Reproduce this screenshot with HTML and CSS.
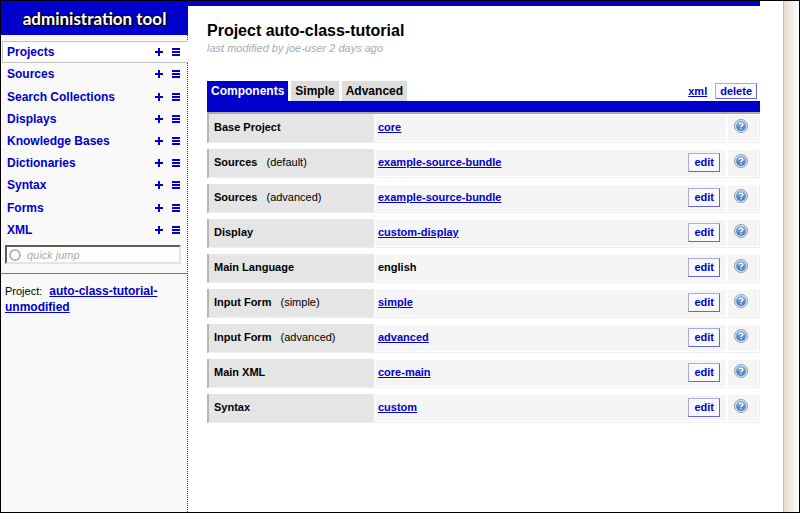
FILE: index.html
```html
<!DOCTYPE html>
<html lang="en">
<head>
<meta charset="utf-8">
<title>administration tool</title>
<link rel="stylesheet" href="styles.css">
</head>
<body>
<svg class="defs" width="0" height="0" aria-hidden="true">
  <defs>
    <linearGradient id="ball" x1="0" y1="0" x2="0" y2="1">
      <stop offset="0" stop-color="#8fb2dc"/><stop offset="1" stop-color="#3f75b3"/>
    </linearGradient>
    <symbol id="plus" viewBox="0 0 8 8"><path d="M3 0h2v3h3v2H5v3H3V5H0V3h3z"/></symbol>
    <symbol id="list" viewBox="0 0 8 8"><path d="M0 0h8v2H0zM0 3h8v2H0zM0 6h8v2H0z"/></symbol>
    <symbol id="help" viewBox="0 0 14 14">
      <circle cx="7" cy="7" r="6.5" fill="#d5e3f2" stroke="#7f9fc6"/>
      <circle cx="7" cy="7" r="5" fill="url(#ball)"/>
      <path d="M5.2 5.6C5.2 3.7 8.8 3.7 8.8 5.5C8.8 6.8 7 6.7 7 8.2M7 9.2v1.4" fill="none" stroke="#fff" stroke-width="1.4"/>
    </symbol>
  </defs>
</svg>
<div class="app">
  <aside class="sidebar">
    <div class="brand">administration tool</div>
    <div class="panel">
      <nav class="menu">
        <div class="item current"><a href="#">Projects</a><button aria-label="Add project"><svg><use href="#plus"/></svg></button><button aria-label="List projects"><svg><use href="#list"/></svg></button></div>
        <div class="item"><a href="#">Sources</a><button aria-label="Add source"><svg><use href="#plus"/></svg></button><button aria-label="List sources"><svg><use href="#list"/></svg></button></div>
        <div class="item"><a href="#">Search Collections</a><button aria-label="Add search collection"><svg><use href="#plus"/></svg></button><button aria-label="List search collections"><svg><use href="#list"/></svg></button></div>
        <div class="item"><a href="#">Displays</a><button aria-label="Add display"><svg><use href="#plus"/></svg></button><button aria-label="List displays"><svg><use href="#list"/></svg></button></div>
        <div class="item"><a href="#">Knowledge Bases</a><button aria-label="Add knowledge base"><svg><use href="#plus"/></svg></button><button aria-label="List knowledge bases"><svg><use href="#list"/></svg></button></div>
        <div class="item"><a href="#">Dictionaries</a><button aria-label="Add dictionary"><svg><use href="#plus"/></svg></button><button aria-label="List dictionaries"><svg><use href="#list"/></svg></button></div>
        <div class="item"><a href="#">Syntax</a><button aria-label="Add syntax"><svg><use href="#plus"/></svg></button><button aria-label="List syntaxes"><svg><use href="#list"/></svg></button></div>
        <div class="item"><a href="#">Forms</a><button aria-label="Add form"><svg><use href="#plus"/></svg></button><button aria-label="List forms"><svg><use href="#list"/></svg></button></div>
        <div class="item"><a href="#">XML</a><button aria-label="Add XML"><svg><use href="#plus"/></svg></button><button aria-label="List XML"><svg><use href="#list"/></svg></button></div>
      </nav>
      <div class="jump">
        <span class="ring"></span>
        <input type="text" placeholder="quick jump" aria-label="quick jump">
      </div>
      <p class="recent">Project: <a href="#">auto-class-tutorial-unmodified</a></p>
    </div>
  </aside>
  <main class="main">
    <div class="topbar"></div>
    <div class="content">
      <h1>Project auto-class-tutorial</h1>
      <p class="modified">last modified by joe-user 2 days ago</p>
      <div class="toolbar">
        <div class="tabs">
          <button class="tab active">Components</button>
          <button class="tab">Simple</button>
          <button class="tab">Advanced</button>
        </div>
        <div class="actions"><a href="#">xml</a><button class="button small">delete</button></div>
      </div>
      <div class="rule"></div>
      <table class="settings">
        <tr><th scope="row">Base Project</th><td class="value"><a href="#">core</a></td><td class="edit"></td><td class="help"><button aria-label="Help"><svg><use href="#help"/></svg></button></td></tr>
        <tr><th scope="row">Sources <span>(default)</span></th><td class="value"><a href="#">example-source-bundle</a></td><td class="edit"><button class="button">edit</button></td><td class="help"><button aria-label="Help"><svg><use href="#help"/></svg></button></td></tr>
        <tr><th scope="row">Sources <span>(advanced)</span></th><td class="value"><a href="#">example-source-bundle</a></td><td class="edit"><button class="button">edit</button></td><td class="help"><button aria-label="Help"><svg><use href="#help"/></svg></button></td></tr>
        <tr><th scope="row">Display</th><td class="value"><a href="#">custom-display</a></td><td class="edit"><button class="button">edit</button></td><td class="help"><button aria-label="Help"><svg><use href="#help"/></svg></button></td></tr>
        <tr><th scope="row">Main Language</th><td class="value">english</td><td class="edit"><button class="button">edit</button></td><td class="help"><button aria-label="Help"><svg><use href="#help"/></svg></button></td></tr>
        <tr><th scope="row">Input Form <span>(simple)</span></th><td class="value"><a href="#">simple</a></td><td class="edit"><button class="button">edit</button></td><td class="help"><button aria-label="Help"><svg><use href="#help"/></svg></button></td></tr>
        <tr><th scope="row">Input Form <span>(advanced)</span></th><td class="value"><a href="#">advanced</a></td><td class="edit"><button class="button">edit</button></td><td class="help"><button aria-label="Help"><svg><use href="#help"/></svg></button></td></tr>
        <tr><th scope="row">Main XML</th><td class="value"><a href="#">core-main</a></td><td class="edit"><button class="button">edit</button></td><td class="help"><button aria-label="Help"><svg><use href="#help"/></svg></button></td></tr>
        <tr><th scope="row">Syntax</th><td class="value"><a href="#">custom</a></td><td class="edit"><button class="button">edit</button></td><td class="help"><button aria-label="Help"><svg><use href="#help"/></svg></button></td></tr>
      </table>
    </div>
  </main>
  <div class="gutter"></div>
</div>
</body>
</html>
```
FILE: styles.css
```css
* { box-sizing: border-box; }
body { margin: 0; font: 11px/16px "Liberation Sans", Arial, sans-serif; color: #000; background: #fff; }
a { color: #0000cc; font-weight: bold; }
button { margin: 0; padding: 0; border: 0; background: none; font: inherit; font-weight: bold; color: inherit; cursor: pointer; }
svg { display: block; }
.defs { position: absolute; }
.app { display: flex; min-height: 100vh; border: 1px solid #000; }

.sidebar { display: flex; flex-direction: column; flex: 0 0 187px; }
.brand { height: 34px; padding-top: 1px; line-height: 34px; text-align: center; background: #0000cc; color: #fff; font-family: Lato, sans-serif; font-size: 17px; font-weight: 700; text-shadow: 0 0 2px #000, 1px 1px 2px #000, -1px 0 2px #000; }
.panel { flex: 1; padding-top: 6px; background: #f9f9f9; border-right: 1px dotted #444; }
.menu { display: grid; grid-auto-rows: 1fr; height: 200px; margin-right: -1px; }
.item { display: flex; align-items: center; gap: 9px; padding: 0 8px 0 6px; color: #0000cc; }
.item.current { margin-left: 1px; padding-left: 4px; background: #fff; border: 1px solid #c4c4c4; border-right: 0; }
.item a { flex: 1; font-size: 12px; text-decoration: none; }
.item svg { width: 8px; height: 8px; fill: #0000cc; shape-rendering: crispEdges; }
.jump { display: flex; align-items: center; gap: 6px; height: 19px; margin: 4px 6px 9px 4px; padding-left: 2px; background: #fff; border: 2px solid #625a50; border-right-color: #e9e3dc; border-bottom-color: #e9e3dc; }
.ring { width: 12px; height: 12px; border: 2px solid #b5b5b5; border-radius: 50%; }
.jump input { flex: 1; min-width: 0; padding: 0; border: 0; outline: 0; background: none; font: inherit; font-style: italic; }
.jump input::placeholder { color: #aaa; }
.recent { margin: 0; padding: 9px 4px; border-top: 1px solid #777; }
.recent a { margin-left: 4px; font-size: 12px; }

.main { flex: 1; }
.topbar { height: 5px; margin-right: 23px; background: #0000cc; }
.content { padding: 15px 23px 0 19px; }
h1 { margin: 0; font-size: 16px; line-height: 19px; }
.modified { margin: 0; font-style: italic; color: #aaa; }
.toolbar { display: flex; justify-content: space-between; align-items: flex-end; margin-top: 25px; }
.tabs { display: flex; gap: 3px; }
.tab { height: 20px; padding: 0 4px; font-size: 12px; background: #ddd; }
.tab.active { background: #0000cc; color: #fff; }
.actions { display: flex; align-items: center; gap: 8px; padding: 0 3px 2px 0; }
.rule { height: 13px; background: #0000cc; border-bottom: 2px solid #aaa; }
.button { height: 19px; padding: 0 5px; line-height: 15px; color: #0000cc; background: #f9f9fc; border: 1px solid; border-color: #aaaadd #6666cc #6666cc #aaaadd; }
.button.small { height: 16px; padding: 0 4px; line-height: 12px; }

.settings { width: 100%; margin-top: -6px; border-spacing: 0 6px; table-layout: fixed; }
.settings th, .settings td { height: 29px; padding: 0 0 2px; text-align: left; font-weight: bold; }
.settings th { width: 167px; padding-left: 5px; background: #e5e5e5; border-left: 2px solid #b5b5b5; border-bottom: 1px solid #eee; }
.settings th span { margin-left: 6px; font-weight: normal; }
.settings td { background: #f5f5f5; border-bottom: 1px solid #eee; box-shadow: inset 0 1px #fff, inset 0 -1px #fff; }
.settings .value { padding-left: 3px; border-left: 1px solid #fff; }
.settings .edit { width: 46px; padding-right: 6px; text-align: right; border-right: 2px solid #fff; }
.settings .edit .button { display: block; margin-left: auto; }
.settings .help { width: 32px; border-right: 1px solid #eee; box-shadow: inset 0 1px #fff, inset -1px -1px #fff; }
.help button { display: block; margin: 0 6px 3px; }
.help svg { width: 14px; height: 14px; }

.gutter { flex: 0 0 16px; border-left: 1px solid #c3b8a5; background: linear-gradient(to right, #e5dccf, #fff); }
```
